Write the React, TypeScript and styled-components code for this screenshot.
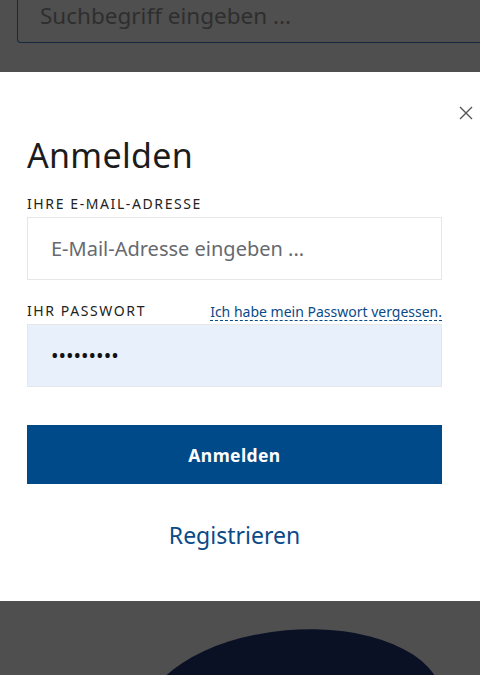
import styled, { createGlobalStyle } from 'styled-components';

const GlobalStyle = createGlobalStyle`
  html, body {
    margin: 0;
    padding: 0;
    background: #4f4f4f;
  }
  body {
    font-family: "Noto Sans", "Open Sans", sans-serif;
  }
`;

const Page = styled.div`
  width: 480px;
  height: 675px;
  overflow: hidden;
  display: flex;
  flex-direction: column;
  background: #4f4f4f;
`;

const SearchBar = styled.div`
  height: 72px;
  padding-left: 17px;
  display: flex;
  align-items: flex-start;
`;

const SearchField = styled.div`
  flex: 1;
  height: 43px;
  border: 1px solid #15283f;
  border-top: none;
  border-right: none;
  border-radius: 0 0 0 4px;
  padding: 0 0 0 22px;
  font-size: 22.5px;
  line-height: normal;
  color: #2e2e2e;
  box-sizing: border-box;
`;

const Modal = styled.div`
  background: #fff;
  height: 529px;
  padding: 0 38px 0 27px;
  box-sizing: border-box;
  display: flex;
  flex-direction: column;
`;

const CloseRow = styled.div`
  display: flex;
  justify-content: flex-end;
  margin-right: -31px;
  padding-top: 34px;
  height: 14px;
`;

const Title = styled.h1`
  margin: 13px 0 0;
  font-size: 34px;
  font-weight: 400;
  line-height: 44px;
  color: #1c1c1c;
  letter-spacing: 0.3px;
`;

const LabelRow = styled.div<{ $top: number }>`
  display: flex;
  justify-content: space-between;
  align-items: flex-end;
  margin-top: ${(p) => p.$top}px;
  height: 20px;
  padding-bottom: 5px;
`;

const Label = styled.label`
  font-size: 14px;
  letter-spacing: 1.6px;
  text-transform: uppercase;
  color: #222;
  line-height: 16px;
`;

const ForgotLink = styled.a`
  font-size: 14px;
  color: #0b4a88;
  text-decoration: none;
  border-bottom: 1px dashed #0b4a88;
  line-height: 17px;
  margin-bottom: -2px;
`;

const Field = styled.input<{ $filled?: boolean }>`
  width: 100%;
  height: 63px;
  box-sizing: border-box;
  border: 1px solid #e6e6e6;
  background: ${(p) => (p.$filled ? '#e8f0fc' : '#fff')};
  padding: 0 23px;
  font-family: inherit;
  font-size: 20px;
  color: #111;
  outline: none;
  &::placeholder {
    color: #666a70;
  }
`;

const SubmitButton = styled.button`
  margin-top: 38px;
  height: 59px;
  width: 100%;
  border: none;
  background: #004a8a;
  color: #fff;
  font-family: inherit;
  font-weight: 700;
  font-size: 17.5px;
  letter-spacing: 0.4px;
`;

const RegisterLink = styled.a`
  align-self: center;
  margin-top: 35px;
  font-size: 23px;
  color: #0b4a88;
  text-decoration: none;
`;

const Backdrop = styled.div`
  flex: 1;
  display: flex;
  justify-content: center;
  padding-top: 29px;
  padding-left: 105px;
  overflow: hidden;
`;

const Blob = styled.div`
  width: 300px;
  height: 160px;
  border-radius: 50%;
  background: #0b1125;
  transform: rotate(-5deg);
`;

export default function App() {
  return (
    <Page>
      <GlobalStyle />
      <SearchBar>
        <SearchField>Suchbegriff eingeben ...</SearchField>
      </SearchBar>
      <Modal>
        <CloseRow>
          <svg width="14" height="14" viewBox="0 0 14 14" fill="none" stroke="#555" strokeWidth="1.4">
            <path d="M1 1l12 12M13 1L1 13" />
          </svg>
        </CloseRow>
        <Title>Anmelden</Title>
        <LabelRow $top={15}>
          <Label htmlFor="email">Ihre E-Mail-Adresse</Label>
        </LabelRow>
        <Field id="email" type="email" placeholder="E-Mail-Adresse eingeben ..." />
        <LabelRow $top={19}>
          <Label htmlFor="pw">Ihr Passwort</Label>
          <ForgotLink href="#">Ich habe mein Passwort vergessen.</ForgotLink>
        </LabelRow>
        <Field id="pw" type="password" defaultValue="geheim123" $filled />
        <SubmitButton type="button">Anmelden</SubmitButton>
        <RegisterLink href="#">Registrieren</RegisterLink>
      </Modal>
      <Backdrop>
        <Blob />
      </Backdrop>
    </Page>
  );
}
